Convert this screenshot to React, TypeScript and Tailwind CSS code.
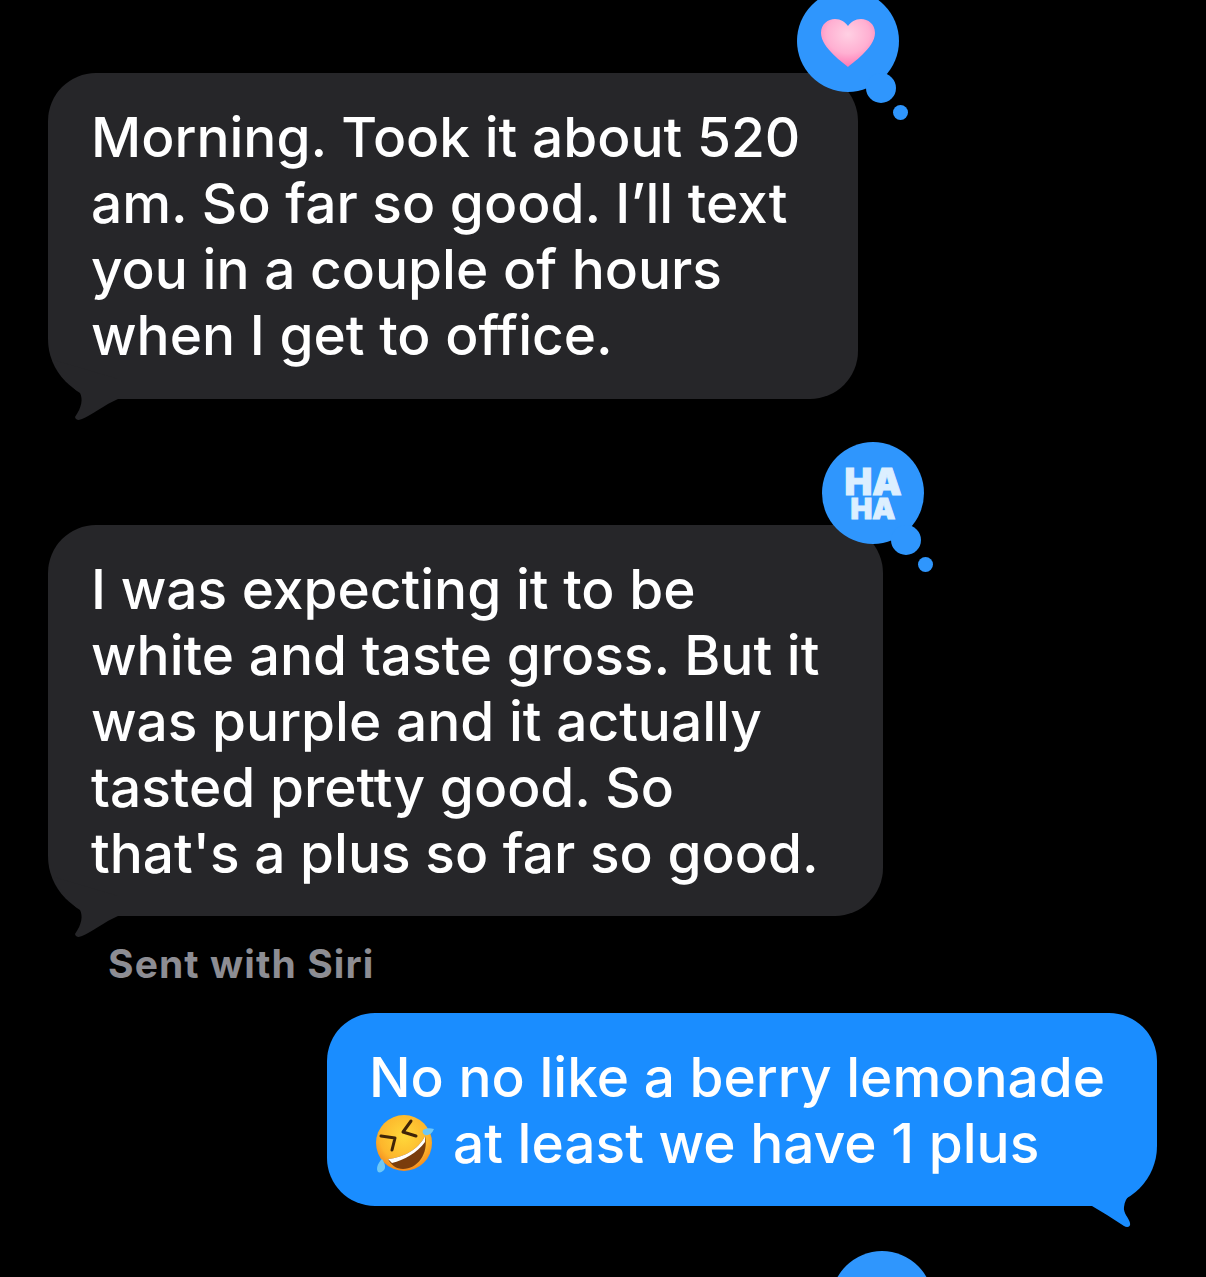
import type { ReactNode } from "react";

const bubbleText = "text-white text-[55px] leading-[66px] font-medium whitespace-nowrap";

function Reaction({ children }: { children?: ReactNode }) {
  return (
    <div className="absolute -top-[83px] -right-[41px] w-[102px] h-[125px]">
      <div className="relative w-[102px] h-[102px] rounded-full bg-[#2f96fd] flex flex-col items-center justify-center">
        {children}
      </div>
      <div className="absolute left-[69px] top-[83px] w-[30px] h-[30px] rounded-full bg-[#2f96fd]" />
      <div className="absolute left-[96px] top-[115px] w-[15px] h-[15px] rounded-full bg-[#2f96fd]" />
    </div>
  );
}

function GrayTail() {
  return (
    <svg className="absolute left-0 -bottom-[22px]" width="80" height="62" viewBox="0 0 80 62">
      <path
        d="M6 1C12 15 22 28 32 34C35 40 34 48 27 58C28 62 32 61 34 60C44 56 56 46 70 40L70 20Z"
        fill="#262629"
      />
    </svg>
  );
}

function BlueTail() {
  return (
    <svg className="absolute right-0 -bottom-[24px]" width="80" height="80" viewBox="0 0 80 80">
      <path
        d="M78 0C76 12 71 27 63 37C56 42 48 46 47 57C46 63 52 68 53 73C54 77 50 78 47 76L30 65L15 56L0 56L0 0Z"
        fill="#1a8dff"
      />
    </svg>
  );
}

function HeartIcon() {
  return (
    <svg width="56" height="50" viewBox="0 0 56 50" className="mt-[3px]">
      <defs>
        <radialGradient id="heartFill" cx="50%" cy="32%" r="72%">
          <stop offset="0%" stopColor="#ffd0e3" />
          <stop offset="55%" stopColor="#ffb0d2" />
          <stop offset="100%" stopColor="#ff70b0" />
        </radialGradient>
      </defs>
      <path
        d="M28 49C25 46 1 30 1 15C1 6 8 1 15 1C21 1 25 4 28 8C31 4 35 1 41 1C48 1 55 6 55 15C55 30 31 46 28 49Z"
        fill="url(#heartFill)"
      />
    </svg>
  );
}

function RoflEmoji() {
  return (
    <svg width="62" height="62" viewBox="0 0 62 62" className="shrink-0">
      <defs>
        <radialGradient id="faceFill" cx="50%" cy="38%" r="62%">
          <stop offset="0%" stopColor="#ffd83a" />
          <stop offset="70%" stopColor="#fdb62c" />
          <stop offset="100%" stopColor="#f48a1e" />
        </radialGradient>
      </defs>
      <circle cx="31" cy="31" r="28" fill="url(#faceFill)" />
      <path d="M15 47C30 46 46 37 52 24C56 42 44 57 30 57C23 57 18 53 15 47Z" fill="#7a3d0c" />
      <path d="M15 47C30 46 46 37 52 24L52 30C44 41 31 48 19 51Z" fill="#fff" />
      <path d="M38 9L30 20L43 24" fill="none" stroke="#3f2408" strokeWidth="3" strokeLinecap="round" strokeLinejoin="round" />
      <path d="M8 24L22 26L19 38" fill="none" stroke="#3f2408" strokeWidth="3" strokeLinecap="round" strokeLinejoin="round" />
      <path d="M50 18C53 16 57 16 61 17C59 22 55 24 52 23C50 22 49 20 50 18Z" fill="#6fc8f5" />
      <path d="M5 60C3 57 4 52 9 47C12 51 13 56 11 58C9 60 7 61 5 60Z" fill="#6fc8f5" />
    </svg>
  );
}

export default function App() {
  return (
    <div
      className="w-[1206px] h-[1277px] overflow-hidden bg-black pt-[73px] flex flex-col"
      style={{ fontFamily: "Inter, 'Liberation Sans', sans-serif" }}
    >
      <div className="relative shrink-0 ml-[48px] w-[810px] rounded-[48px] rounded-bl-[60px] bg-[#262629] pl-[43px] py-[31px]">
        <p className={bubbleText}>
          Morning. Took it about 520
          <br />
          am. So far so good. I’ll text
          <br />
          you in a couple of hours
          <br />
          when I get to office.
        </p>
        <GrayTail />
        <Reaction>
          <HeartIcon />
        </Reaction>
      </div>

      <div className="relative shrink-0 ml-[48px] mt-[126px] w-[835px] rounded-[48px] rounded-bl-[60px] bg-[#262629] pl-[43px] pt-[31px] pb-[30px]">
        <p className={bubbleText}>
          I was expecting it to be
          <br />
          white and taste gross. But it
          <br />
          was purple and it actually
          <br />
          tasted pretty good. So
          <br />
          that's a plus so far so good.
        </p>
        <GrayTail />
        <Reaction>
          <p className="mt-[4px] text-[#dcefff] [-webkit-text-stroke:1px_#dcefff] font-black text-center text-[29px] leading-[27px] first-line:text-[37px]">
            HA
            <br />
            HA
          </p>
        </Reaction>
      </div>

      <p className="shrink-0 ml-[108px] mt-[24px] text-[39px] leading-[48px] font-bold tracking-[1.1px] text-[#8d8d93] whitespace-nowrap">
        Sent with Siri
      </p>

      <div className="relative shrink-0 ml-[327px] mt-[25px] w-[830px] rounded-[48px] rounded-br-[60px] bg-[#1a8dff] pl-[42px] pt-[31px] pb-[30px]">
        <p className={bubbleText}>No no like a berry lemonade</p>
        <div className="flex items-center gap-[18px] pl-[4px]">
          <RoflEmoji />
          <p className={bubbleText}>at least we have 1 plus</p>
        </div>
        <BlueTail />
      </div>

      <div className="relative shrink-0 ml-[48px] mt-[128px] w-[844px] h-[200px] rounded-[48px] bg-[#262629]">
        <Reaction />
      </div>
    </div>
  );
}
